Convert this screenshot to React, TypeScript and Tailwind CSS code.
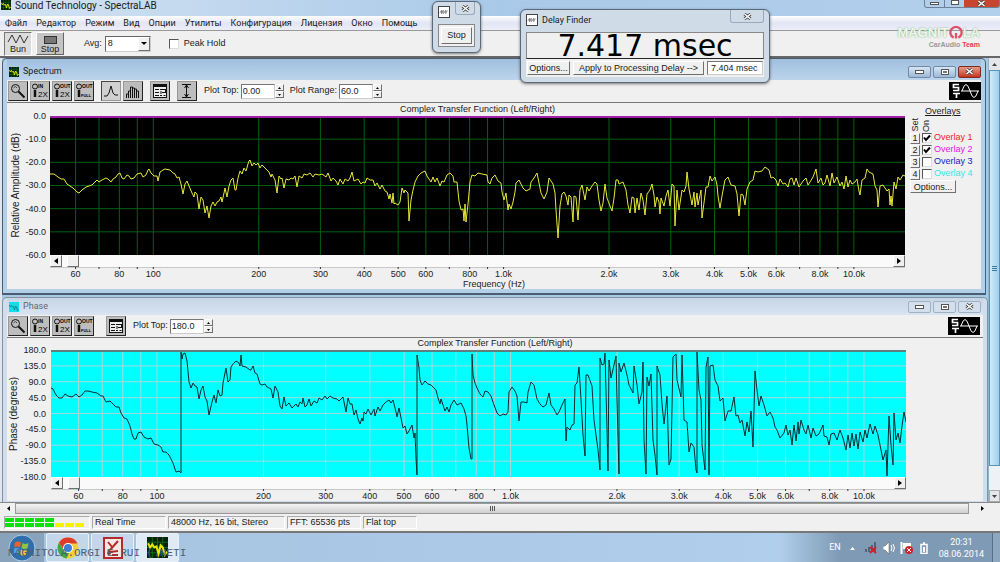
import React, { useState } from "react";

const MENU = ["Файл", "Редактор", "Режим", "Вид", "Опции", "Утилиты", "Конфигурация", "Лицензия", "Окно", "Помощь"];

const FREQS = [60, 70, 80, 90, 100, 200, 300, 400, 500, 600, 700, 800, 900, 1000, 2000, 3000, 4000, 5000, 6000, 7000, 8000, 9000, 10000];
const UNLABELLED = [70, 90, 700, 900, 7000, 9000];

const SPECTRUM_TRACE =
  "50,174 54,174 58,177 61,179 64,179 67,184 70,186 73,188 77,192 79,193 82,190 86,187 89,186 92,185 95,182 97,180 99,182 102,180 106,178 108,179 111,182 113,179 116,177 118,174 120,173 122,178 124,179 127,175 129,176 131,179 134,178 137,174 141,173 143,177 146,175 148,170 149,169 151,173 154,176 157,176 158,181 160,172 163,170 165,169 170,170 173,173 175,174 177,178 179,177 181,184 183,194 185,184 187,181 189,186 192,193 194,197 195,192 197,194 199,209 201,197 203,200 205,213 207,206 209,218 211,206 213,202 215,206 217,202 219,201 221,197 222,202 224,193 225,188 227,197 229,186 231,180 233,178 235,190 236,190 238,178 240,171 242,174 244,168 246,171 248,164 249,161 250,160 252,166 254,163 256,165 258,163 260,168 262,165 266,169 269,172 271,177 272,174 275,180 277,193 279,176 281,179 282,178 284,188 286,179 289,180 291,178 293,179 295,176 297,187 299,176 302,178 304,174 307,175 310,173 313,177 315,174 319,175 322,174 326,177 328,173 331,181 333,178 336,181 338,185 340,179 343,184 345,179 348,181 350,178 352,172 354,181 358,179 361,184 363,182 365,183 367,178 370,180 373,180 375,186 377,183 380,189 382,185 385,191 387,192 389,199 390,194 392,203 393,193 394,204 395,203 398,205 400,202 402,188 404,193 405,190 408,193 409,221 411,200 413,190 415,182 418,176 421,173 425,171 427,176 429,179 431,182 433,177 435,182 437,178 440,186 442,181 444,182 447,175 450,173 453,176 454,182 457,182 459,201 461,210 463,209 464,221 465,204 466,222 468,204 470,182 472,175 475,176 478,173 482,174 487,175 488,182 490,184 492,178 495,175 498,181 501,183 502,192 504,200 506,193 508,210 509,204 511,209 513,202 515,192 516,183 519,180 523,188 526,191 530,189 531,182 534,178 537,173 539,183 541,193 544,199 547,192 549,178 551,181 553,184 555,193 556,210 558,238 560,206 562,194 564,192 566,196 568,205 569,195 571,197 573,222 574,196 576,197 578,220 580,190 582,185 585,200 587,187 589,191 592,186 595,182 597,184 599,200 601,211 603,203 605,184 607,198 610,206 612,211 614,198 616,180 618,180 619,184 623,182 626,190 628,205 630,213 632,197 634,198 635,213 637,198 639,210 641,193 643,200 645,215 647,194 650,190 652,184 654,195 655,207 657,197 659,202 660,214 661,198 664,206 666,196 668,190 670,206 672,184 674,186 675,226 677,190 679,210 682,190 684,192 686,186 687,172 689,189 692,205 694,192 695,207 697,193 698,205 701,190 702,218 705,195 706,187 708,187 710,176 712,181 715,177 717,185 718,196 720,208 722,196 724,185 725,180 728,177 731,185 735,186 737,194 739,216 741,194 743,195 745,205 747,189 750,182 753,180 755,171 758,172 762,171 765,167 769,170 771,178 773,177 776,180 778,186 780,179 783,184 785,183 788,187 790,179 792,178 794,185 796,178 799,187 803,181 806,178 808,185 810,182 813,177 816,169 818,183 821,178 823,185 825,183 827,175 830,186 832,173 834,183 837,177 840,186 842,182 844,189 846,176 848,187 850,180 852,184 855,182 857,179 859,191 860,195 862,180 865,178 867,169 869,172 873,174 875,186 877,190 878,207 880,186 883,185 885,188 887,191 889,189 890,205 891,196 892,206 894,182 896,189 898,177 900,180 903,175 905,176";

const PHASE_TRACE =
  "51,388 53,389 56,395 59,398 62,398 65,394 68,396 72,397 76,394 79,397 82,395 85,391 88,391 92,392 97,393 101,396 103,396 106,402 110,401 113,404 116,407 119,407 121,413 124,418 127,419 130,426 132,434 134,439 136,439 138,433 141,432 144,437 148,439 151,438 154,444 158,445 161,447 163,452 166,452 169,455 173,463 176,472 179,471 181,473 181,352 182,359 183,354 185,353 187,361 189,382 191,388 193,383 195,386 197,387 199,399 201,390 203,386 205,397 207,401 209,415 212,402 214,395 216,403 218,390 220,396 222,395 223,383 226,368 228,382 230,380 231,367 233,364 236,361 239,363 240,366 241,355 242,366 246,367 250,370 251,370 253,366 255,373 257,374 260,384 262,385 265,384 267,387 271,389 273,398 275,386 278,392 280,406 282,409 284,397 286,406 289,403 292,408 296,404 298,407 300,402 302,404 303,398 305,407 307,405 309,399 311,406 314,401 317,403 319,398 322,400 325,396 327,399 330,396 333,398 337,399 339,401 343,397 344,402 346,412 348,398 350,404 352,404 354,415 356,410 358,419 360,424 362,418 363,421 364,412 366,414 368,409 371,415 374,409 375,416 378,407 380,411 383,405 386,402 389,400 391,403 393,400 396,412 397,417 399,408 401,418 403,428 405,426 407,434 409,431 412,425 414,438 415,433 416,458 417,475 417,355 419,368 420,380 422,385 425,381 428,384 431,385 434,388 436,390 438,398 440,404 441,399 443,405 445,411 447,407 449,412 451,405 454,400 457,405 461,403 464,409 466,416 467,425 469,448 471,459 472,459 472,354 473,375 475,383 477,388 480,394 483,397 485,391 488,392 491,396 494,405 497,413 500,416 503,414 506,415 508,412 509,392 512,387 515,391 517,396 519,421 521,402 524,402 527,403 528,392 531,382 534,385 537,399 540,404 543,407 546,405 549,393 551,405 554,409 557,415 559,412 562,405 565,399 566,441 567,427 570,430 572,425 574,424 575,385 577,383 579,367 581,400 583,435 585,456 586,375 588,375 592,386 594,420 598,450 600,470 600,358 602,365 604,364 605,353 607,430 608,471 609,360 611,378 614,365 616,356 617,400 619,474 619,363 621,372 624,363 627,375 629,385 633,393 634,366 637,385 639,404 642,392 643,362 644,440 646,474 647,377 649,386 651,374 653,440 655,455 657,475 657,366 660,375 662,404 664,424 667,396 669,465 671,459 673,357 676,354 677,380 681,397 682,355 684,420 687,422 689,452 691,443 694,447 696,470 697,473 697,352 699,390 701,400 702,445 705,470 706,367 708,357 709,475 710,366 713,365 715,380 718,386 720,401 723,398 725,421 728,411 731,411 734,397 736,416 738,415 740,423 742,420 745,436 747,422 749,432 751,411 752,429 753,447 755,371 757,390 759,406 761,396 764,405 767,416 770,412 773,418 775,427 777,430 780,438 784,433 786,425 788,435 790,430 792,445 794,425 796,441 798,422 799,434 801,420 804,430 806,434 808,425 811,438 813,428 816,436 819,434 823,425 824,436 827,437 829,445 831,434 834,433 837,440 840,430 843,438 846,450 848,435 850,448 852,433 854,446 856,434 858,449 860,432 863,442 865,430 867,438 870,424 873,434 875,426 878,435 880,445 883,460 886,450 887,476 889,416 891,445 893,465 894,413 896,440 898,433 900,443 902,426 904,412 906,422";

interface Range {
  lo: number;
  hi: number;
}

const SPECTRUM_RANGE: Range = { lo: 1.7051, hi: 4.1459 };
const PHASE_RANGE: Range = { lo: 1.7001, hi: 4.1188 };

const xAt = (freq: number, r: Range) => `${((Math.log10(freq) - r.lo) / (r.hi - r.lo)) * 100}%`;
const freqLabel = (f: number) => (f < 1000 ? String(f) : `${(f / 1000).toFixed(1)}k`);

const raised = "border border-t-white border-l-white border-r-[#6f6f6f] border-b-[#6f6f6f] bg-[#f0f0f0]";

interface PlotProps {
  range: Range;
  rows: number;
  viewBox: string;
  trace: string;
  gridColor: string;
  traceColor: string;
  topColor: string;
  className: string;
}

const Plot: React.FC<PlotProps> = ({ range, rows, viewBox, trace, gridColor, traceColor, topColor, className }) => (
  <svg className={`block w-full ${className}`} role="img" aria-label="Complex transfer function plot">
    {FREQS.map((f) => (
      <line key={f} x1={xAt(f, range)} x2={xAt(f, range)} y1="0" y2="100%" stroke={gridColor} />
    ))}
    {Array.from({ length: rows - 1 }, (_, i) => (
      <line key={i} x1="0" x2="100%" y1={`${((i + 1) / rows) * 100}%`} y2={`${((i + 1) / rows) * 100}%`} stroke={gridColor} />
    ))}
    <svg width="100%" height="100%" viewBox={viewBox} preserveAspectRatio="none">
      <polyline points={trace} fill="none" stroke={traceColor} strokeWidth="1" strokeLinejoin="round" vectorEffect="non-scaling-stroke" />
    </svg>
    <line x1="0" x2="100%" y1="1" y2="1" stroke={topColor} strokeWidth="2" />
  </svg>
);

const PlotScroll: React.FC = () => (
  <div className="flex h-[12px] bg-[#fafafa]">
    <button aria-label="Scroll left" className={`flex w-[12px] items-center justify-center ${raised}`}>
      <svg width="4" height="6"><path d="M4 0v6L0 3z" fill="#000" /></svg>
    </button>
    <div className={`ml-[5px] w-[12px] ${raised}`} />
    <div className="flex-1" />
    <button aria-label="Scroll right" className={`flex w-[12px] items-center justify-center ${raised}`}>
      <svg width="4" height="6"><path d="M0 0v6l4-3z" fill="#000" /></svg>
    </button>
  </div>
);

const FreqAxis: React.FC<{ range: Range }> = ({ range }) => (
  <svg className="block h-[12px] w-full overflow-visible">
    <line x1="0" x2="100%" y1="0.5" y2="0.5" stroke="#c8c8c8" />
    {FREQS.map((f) => (
      <line key={f} x1={xAt(f, range)} x2={xAt(f, range)} y1="0" y2="2" stroke="#333" />
    ))}
    {FREQS.filter((f) => !UNLABELLED.includes(f)).map((f) => (
      <text key={f} x={xAt(f, range)} y="10" textAnchor="middle" className="fill-[#222] text-[9px]">
        {freqLabel(f)}
      </text>
    ))}
  </svg>
);

interface ScaleProps {
  title: string;
  values: string[];
  className: string;
}

const Scale: React.FC<ScaleProps> = ({ title, values, className }) => (
  <div className={`flex w-[43px] justify-between pr-[4px] ${className}`}>
    <div className="flex w-[18px] items-center justify-center">
      <span className="rotate-180 text-[10px] leading-[12px] whitespace-nowrap [writing-mode:vertical-rl]">{title}</span>
    </div>
    <div className="-my-[5px] flex flex-col justify-between text-right">
      {values.map((v) => (
        <span key={v} className="leading-[10px]">{v}</span>
      ))}
    </div>
  </div>
);

const ToolButton: React.FC<{ label: string; pressed?: boolean; children: React.ReactNode }> = ({ label, pressed, children }) => (
  <button
    aria-label={label}
    className={`size-[20px] border ${pressed ? "border-t-[#444] border-l-[#444] border-r-[#999] border-b-[#999] bg-[#d0d0d0]" : "border-t-[#999] border-l-[#999] border-r-[#222] border-b-[#222] bg-[#bdbdbd]"}`}
  >
    <svg width="18" height="18" viewBox="0 0 18 18" fill="none" stroke="#111">{children}</svg>
  </button>
);

const ZoomGlyph: React.FC<{ top: string; bottom: string; small?: boolean }> = ({ top, bottom, small }) => (
  <>
    <circle cx="4" cy="4.5" r="2.5" />
    <path d="M4 8v7" strokeWidth="2.5" />
    <text x="7" y="6" stroke="none" className="fill-black text-[5px] font-bold">{top}</text>
    <text x={small ? "6" : "7"} y="15" stroke="none" className={small ? "fill-black text-[4px] font-bold" : "fill-black text-[8px]"}>{bottom}</text>
  </>
);

const ZoomTools: React.FC = () => (
  <div className="flex gap-[2px]">
    <ToolButton label="Zoom">
      <circle cx="6.5" cy="6.5" r="4" />
      <path d="M4.5 6q2-3 3.5 0" strokeWidth="0.7" />
      <path d="m9.5 9.5 6 6" strokeWidth="2" />
    </ToolButton>
    <ToolButton label="Zoom in 2X"><ZoomGlyph top="IN" bottom="2X" /></ToolButton>
    <ToolButton label="Zoom out 2X"><ZoomGlyph top="OUT" bottom="2X" /></ToolButton>
    <ToolButton label="Zoom out full"><ZoomGlyph top="OUT" bottom="FULL" small /></ToolButton>
  </div>
);

const OptionsTool: React.FC = () => (
  <ToolButton label="Display options">
    <rect x="2.5" y="2.5" width="13" height="13" fill="#eee" />
    <path d="M2 4h14" strokeWidth="2" />
    <path d="M4 7.5h4M4 10.5h4M4 13.5h4M9 7.5h5M11 10.5h4M9 13.5h2M12.5 13.5h2" />
    <path d="M10 9v3M14.5 7v3" />
  </ToolButton>
);

const NumberBox: React.FC<{ label: string; value: string; id: string }> = ({ label, value, id }) => (
  <div className="flex items-center">
    <label htmlFor={id} className="pr-[2px] whitespace-nowrap">{label}</label>
    <input id={id} defaultValue={value} className="h-[15px] w-[34px] border border-[#777] border-r-[#ccc] border-b-[#ccc] bg-white pl-[1px] text-[9px] outline-none" />
    <div className="flex w-[9px] flex-col">
      <button aria-label={`${label} up`} className={`flex h-[7px] items-center justify-center ${raised}`}>
        <svg width="3" height="2"><path d="M0 2h3L1.5 0z" /></svg>
      </button>
      <button aria-label={`${label} down`} className={`flex h-[7px] items-center justify-center ${raised}`}>
        <svg width="3" height="2"><path d="M0 0h3L1.5 2z" /></svg>
      </button>
    </div>
  </div>
);

const Logo: React.FC = () => (
  <svg width="32" height="18" viewBox="0 0 32 18" className="ml-auto bg-black" fill="none" stroke="#fff" role="img" aria-label="ST">
    <path d="M10 2.5H4.5v3h5v3H4M4 11.5h7M7.5 11v5" strokeWidth="1.7" />
    <path d="M12 9h18M13 9Q17-4 21 9T29 9" />
  </svg>
);

const Cross: React.FC<{ color: string }> = ({ color }) => (
  <svg width="9" height="7" viewBox="0 0 9 7">
    <path d="m1.5 1 6 5m0-5-6 5" stroke="#444" strokeWidth="3" />
    <path d="m1.5 1 6 5m0-5-6 5" stroke={color} strokeWidth="1.5" />
  </svg>
);

const CaptionButtons: React.FC<{ active?: boolean }> = ({ active }) => {
  const base = "flex h-[12px] w-[23px] items-center justify-center rounded-[2px] border";
  const plain = active ? "border-[#7189a5] bg-gradient-to-b from-[#d6e5f4] to-[#9db9d6]" : "border-[#a3b0bf] bg-[#d3dfec]";
  return (
    <div className="ml-auto flex gap-[2px]">
      <button aria-label="Minimize" className={`${base} ${plain}`}>
        <span className="h-[4px] w-[9px] border border-[#555] bg-white" />
      </button>
      <button aria-label="Maximize" className={`${base} ${plain}`}>
        <span className="h-[6px] w-[8px] border border-[#555] bg-white p-[1px]"><span className="block h-full border border-[#777]" /></span>
      </button>
      <button aria-label="Close" className={`${base} ${active ? "border-[#7c2a20] bg-gradient-to-b from-[#e59a88] to-[#c3321b]" : plain}`}>
        <Cross color="#fff" />
      </button>
    </div>
  );
};

const ScopeIcon: React.FC<{ className?: string; bg?: string; line?: string; grid?: string }> = ({ className = "size-[10px]", bg = "#06230a", line = "#e6e600", grid = "#0b6a1a" }) => (
  <svg viewBox="0 0 20 20" className={className}>
    <rect width="20" height="20" fill={bg} />
    <path d="M5 0v20M10 0v20M15 0v20M0 5h20M0 10h20M0 15h20" stroke={grid} />
    <path d="M1 6l2 4 2-3 2 3 2-1 2 7 2-8 2 2 2 7 2-3" fill="none" stroke={line} strokeWidth="2" />
  </svg>
);

const OVERLAYS = [
  { id: 1, color: "text-[#f02020]", on: true },
  { id: 2, color: "text-[#e020e0]", on: true },
  { id: 3, color: "text-[#2020c0]", on: false },
  { id: 4, color: "text-[#30e8e8]", on: false },
];

const CheckBox: React.FC<{ id: string; checked?: boolean }> = ({ id, checked }) => (
  <span className="grid size-[10px] shrink-0">
    <input id={id} type="checkbox" defaultChecked={checked} className="peer col-start-1 row-start-1 size-[10px] appearance-none border border-[#555] border-r-[#ddd] border-b-[#ddd] bg-white" />
    <svg viewBox="0 0 10 10" className="pointer-events-none invisible col-start-1 row-start-1 size-[10px] peer-checked:visible">
      <path d="m2 4.5 2 2.5 4-4.5" fill="none" stroke="#000" strokeWidth="2" />
    </svg>
  </span>
);

const OverlayPanel: React.FC = () => (
  <div className="w-[76px] pt-[3px] pl-[5px]">
    <div className="pl-[15px] leading-[10px] underline">Overlays</div>
    <div className="flex h-[16px] items-end gap-[1px]">
      <span className="w-[10px] rotate-180 leading-[10px] [writing-mode:vertical-rl]">Set</span>
      <span className="w-[10px] rotate-180 leading-[10px] [writing-mode:vertical-rl]">On</span>
    </div>
    {OVERLAYS.map((o) => (
      <div key={o.id} className="flex h-[12px] items-center">
        <button className={`h-[11px] w-[10px] leading-[9px] ${raised}`}>{o.id}</button>
        <div className="mr-[2px] ml-[2px] flex"><CheckBox id={`overlay-${o.id}`} checked={o.on} /></div>
        <label htmlFor={`overlay-${o.id}`} className={`whitespace-nowrap ${o.color}`}>Overlay {o.id}</label>
      </div>
    ))}
    <button className={`h-[13px] w-[46px] leading-[10px] ${raised}`}>Options...</button>
  </div>
);

const SpectrumWindow: React.FC = () => (
  <section className="mr-[2px] rounded-t-[5px] border-x border-t border-b-2 border-[#4a5d72] bg-[#b4d0e8] px-[4px] pb-[4px]">
    <header className="flex h-[21px] items-center bg-gradient-to-b from-[#9fbfdd] to-[#bcd4ec] pt-[4px] pl-[2px]">
      <ScopeIcon />
      <h2 className="pl-[4px] font-['Roboto'] text-[9px]">Spectrum</h2>
      <CaptionButtons active />
    </header>
    <div className="bg-[#f0f0f0]">
      <div className="flex h-[23px] items-center border-b border-[#777] pl-[1px]">
        <ZoomTools />
        <div className="ml-[7px] flex gap-[2px]">
          <ToolButton label="Line plot" pressed><path d="M2 14h3l2-3 2-7 2 7 2 2h3" /></ToolButton>
          <ToolButton label="Bar plot"><path d="M2.5 16v-4h2v4-7h2v7-11h2v11-10h2v10-9h2v9-7h2v7" /></ToolButton>
        </div>
        <div className="ml-[7px] flex"><OptionsTool /></div>
        <div className="ml-[7px] flex">
          <ToolButton label="Amplitude range"><path d="M4 2.5h9M4 15.5h9M8.5 3v12M6.5 6l2-3 2 3M6.5 12l2 3 2-3" /></ToolButton>
        </div>
        <div className="ml-[7px] flex gap-[6px]">
          <NumberBox id="spectrum-top" label="Plot Top:" value="0.00" />
          <NumberBox id="spectrum-range" label="Plot Range:" value="60.0" />
        </div>
        <Logo />
      </div>
      <div className="flex">
        <Scale className="mt-[13px] h-[139px]" title="Relative Amplitude (dB)" values={["0.0", "-10.0", "-20.0", "-30.0", "-40.0", "-50.0", "-60.0"]} />
        <div className="min-w-0 flex-1">
          <h3 className="h-[13px] text-center leading-[12px]">Complex Transfer Function (Left/Right)</h3>
          <Plot className="h-[139px] bg-black" range={SPECTRUM_RANGE} rows={6} viewBox="50 116 855 139" trace={SPECTRUM_TRACE} gridColor="#00600f" traceColor="#e8e83a" topColor="#a020a8" />
          <PlotScroll />
          <FreqAxis range={SPECTRUM_RANGE} />
        </div>
        <OverlayPanel />
      </div>
      <p className="h-[10px] text-center leading-[10px]">Frequency (Hz)</p>
    </div>
  </section>
);

const PhaseWindow: React.FC = () => (
  <section className="mt-[2px] flex-1 rounded-t-[5px] border-x border-t border-[#8492a3] bg-[#cfdded] px-[4px]">
    <header className="flex h-[17px] items-center bg-gradient-to-b from-[#c6d5e6] to-[#d8e4f1] px-[2px]">
      <ScopeIcon bg="#00e5f0" grid="#37c9d6" line="#0a8a96" />
      <h2 className="pl-[4px] font-['Roboto'] text-[9px] text-[#666]">Phase</h2>
      <CaptionButtons />
    </header>
    <div className="bg-[#f0f0f0]">
      <div className="flex h-[23px] items-center border-b border-[#777] pr-[3px] pl-[1px]">
        <ZoomTools />
        <div className="ml-[12px] flex"><OptionsTool /></div>
        <div className="ml-[7px] flex"><NumberBox id="phase-top" label="Plot Top:" value="180.0" /></div>
        <Logo />
      </div>
      <h3 className="h-[12px] text-center leading-[11px]">Complex Transfer Function (Left/Right)</h3>
      <div className="flex">
        <Scale className="h-[127px]" title="Phase (degrees)" values={["180.0", "135.0", "90.0", "45.0", "0.0", "-45.0", "-90.0", "-135.0", "-180.0"]} />
        <div className="min-w-0 flex-1 pl-[1px]">
          <Plot className="h-[127px] bg-[#00ffff]" range={PHASE_RANGE} rows={8} viewBox="51 350 855 127" trace={PHASE_TRACE} gridColor="#a4d8dc" traceColor="#062b33" topColor="#5f7f7f" />
          <PlotScroll />
          <FreqAxis range={PHASE_RANGE} />
        </div>
        <div className="w-[77px]" />
      </div>
    </div>
  </section>
);

const ToolWindow: React.FC<{ title?: string; className: string; children: React.ReactNode }> = ({ title, className, children }) => (
  <section className={`absolute flex flex-col rounded-[6px] border border-[#5a6a7a] bg-[#cfdce8] px-[5px] pb-[5px] shadow-[0_1px_3px_rgba(0,0,0,0.5)] ${className}`}>
    <header className="flex justify-between">
      <div className="flex items-center gap-[4px] pt-[4px]">
        <svg width="12" height="12" viewBox="0 0 12 12" className="border border-[#444] bg-white">
          <path d="M1 7l2-3v4l2-4v4l3-4v4l2-4" fill="none" stroke="#555" strokeWidth="0.8" />
        </svg>
        {title && <h2 className="font-['Roboto'] text-[9px] leading-[12px]">{title}</h2>}
      </div>
      <button aria-label="Close" className={`flex h-[13px] items-center justify-center rounded-b-[3px] border border-t-0 border-[#9aa9b8] ${title ? "w-[34px]" : "w-[20px]"}`}>
        <Cross color="#fff" />
      </button>
    </header>
    {children}
  </section>
);

const Brand: React.FC = () => (
  <div className="absolute top-[24px] right-[20px] flex flex-col items-end">
    <div className="flex items-center font-['Liberation_Sans'] text-[13px] leading-[17px] font-bold text-[#f1f5ea] [text-shadow:0_0_2px_#6fae80]">
      <span>MAGNIT</span>
      <svg width="14" height="17" viewBox="0 0 15 17" fill="none" stroke="#e0506a" strokeWidth="2.5">
        <path d="M5 14a6 6 0 1 1 5 0M7.5 9v6" />
      </svg>
      <span>LA</span>
    </div>
    <div className="text-[7px] leading-[8px] font-bold text-[#999]">CarAudio <span className="text-[#dd4055]">Team</span></div>
  </div>
);

const Taskbar: React.FC = () => {
  const task = "flex h-[29px] w-[43px] items-center justify-center rounded-[2px] border border-[#e6f0fa] bg-[#c3d6ea]";
  return (
    <footer className="relative flex h-[29px] gap-[2px] bg-gradient-to-r from-[#a5c2df] via-[#b0cfec] via-78% to-[#7f9ab4] to-84%">
      <button aria-label="Start" className="flex w-[44px] items-center justify-center bg-[#8aa3bd]">
        <svg width="28" height="28" viewBox="0 0 28 28">
          <circle cx="14" cy="14" r="13" fill="#2f6ea8" stroke="#a9cbe6" />
          <path d="M7 8.5q3-2 6 0l-1 5q-3-2-6 0z" fill="#e8632a" />
          <path d="M14.5 9q3 2 6 0l-1 5q-3 2-6 0z" fill="#8cc63e" />
          <path d="M5.5 15q3-2 6 0l-1 5q-3-2-6 0z" fill="#4aa8e8" />
          <path d="M13 15.5q3 2 6 0l-1 5q-3 2-6 0z" fill="#f7c52c" />
        </svg>
      </button>
      <button aria-label="Chrome" className={task}>
        <svg width="22" height="22" viewBox="0 0 22 22">
          <circle cx="11" cy="11" r="10.5" fill="#f5cf2f" />
          <path d="M1.9 5.8A10.5 10.5 0 0 1 20.5 6.5H11a4.6 4.6 0 0 0-4.3 6z" fill="#dd3b2c" />
          <path d="M1.9 5.8l5 7.5a4.6 4.6 0 0 0 5.5 2L9.5 21.4A10.5 10.5 0 0 1 1.9 5.8" fill="#3fa648" />
          <circle cx="11" cy="11" r="5" fill="#fff" />
          <circle cx="11" cy="11" r="4" fill="#3d7fd6" />
        </svg>
      </button>
      <button aria-label="Setup tool" className={task}>
        <svg width="20" height="22" viewBox="0 0 20 22">
          <rect x="1" y="1" width="18" height="20" fill="#fbe9e6" stroke="#b52a28" strokeWidth="2" />
          <path d="M5 5l4 5M15 4l-8 9M5 13l2 2 8-1M9 18h6" fill="none" stroke="#b52a28" strokeWidth="2" />
          <circle cx="6" cy="16" r="2" fill="#b52a28" />
        </svg>
      </button>
      <button aria-label="SpectraLAB" className={`${task} bg-[#e0eaf5]`}>
        <ScopeIcon className="size-[21px]" />
      </button>
      <span className="absolute top-[13px] left-[8px] font-['Liberation_Mono'] text-[11px] leading-[14px] whitespace-pre text-[#4a6076]">MAGNITOLA.ORGI E.RUI (.NETI</span>
      <div className="ml-auto flex items-center font-['Roboto'] text-[9px] text-white">
        <span className="mr-[8px]">EN</span>
        <svg width="7" height="4" className="mr-[9px]"><path d="M1 4h5L3.5 1z" fill="#fff" /></svg>
        <svg width="13" height="12" viewBox="0 0 13 12" className="mr-[5px]">
          <path d="M0 10h2V7H0zM3 10h2V5H3zM6 10h2V3H6zM9 10h2V0H9z" fill="#536476" />
          <path d="m5 5 6 6m0-6-6 6" stroke="#d02028" strokeWidth="2" />
        </svg>
        <svg width="12" height="12" viewBox="0 0 12 12" className="mr-[5px]">
          <path d="M0 4h2l4-4v12L2 8H0z" fill="#fff" stroke="#555" strokeWidth="0.5" />
          <path d="M8 3q2 3 0 6M10 2q3 4 0 8" fill="none" stroke="#fff" />
        </svg>
        <svg width="13" height="12" viewBox="0 0 13 12" className="mr-[7px]">
          <path d="M1.5 0v12" stroke="#fff" strokeWidth="2" />
          <path d="M3 1h8v6H3z" fill="#fff" />
          <circle cx="9" cy="8" r="4" fill="#d02028" />
          <path d="m7 6 4 4m0-4-4 4" stroke="#fff" />
        </svg>
        <svg width="8" height="12" viewBox="0 0 8 12" className="mr-[11px]">
          <path d="M1 2.5h6v9H1zM3 1h2" fill="none" stroke="#fff" strokeWidth="1.5" />
          <path d="M3 5h2v5H3z" fill="#fff" />
        </svg>
        <div className="mr-[8px] text-center leading-[12px]">
          <div>20:31</div>
          <div>08.06.2014</div>
        </div>
        <button aria-label="Show desktop" className="h-[29px] w-[8px] border-l border-[#56708a] bg-[#8da7c0]" />
      </div>
    </footer>
  );
};

const App: React.FC = () => {
  const [avg, setAvg] = useState("8");
  const pane = "border border-[#aaa] border-r-white border-b-white pl-[2px] leading-[11px] whitespace-nowrap";

  return (
    <div className="relative flex min-h-screen w-full flex-col overflow-hidden bg-[#f0f0f0] font-['Liberation_Sans',sans-serif] text-[9px] text-[#1a1a1a]">
      <header className="flex h-[16px] items-start bg-gradient-to-r from-[#d4e3f2] via-[#a9c9e8] to-[#b2d0ec] pl-[1px]">
        <ScopeIcon />
        <h1 className="pl-[4px] font-['Roboto'] text-[10px] leading-[12px]">Sound Technology - SpectraLAB</h1>
        <div className="ml-auto flex h-[8px] overflow-hidden rounded-b-[3px] border border-t-0 border-[#6d8299]">
          <button aria-label="Minimize" className="flex w-[20px] items-end justify-center border-r border-[#6d8299] pb-[2px]"><span className="h-[3px] w-[9px] border border-[#555] bg-white" /></button>
          <button aria-label="Restore" className="flex w-[19px] items-end justify-center pb-[2px]"><span className="h-[5px] w-[8px] border border-[#555] bg-white" /></button>
          <button aria-label="Close" className="flex w-[35px] items-center justify-center bg-[#c9452f]"><Cross color="#fff" /></button>
        </div>
      </header>

      <nav className="flex h-[15px] items-center gap-[9px] border-b border-[#999] bg-gradient-to-b from-white via-[#e2e5f4] to-[#eceef8] pl-[5px] font-['Roboto']">
        {MENU.map((item) => (
          <button key={item} className="leading-[12px]">{item}</button>
        ))}
      </nav>

      <div className="flex h-[27px] items-center border-b-2 border-[#666] pl-[4px]">
        <button className="flex h-[24px] w-[28px] flex-col items-center border border-[#777] border-r-white border-b-white bg-[#dcdcdc] leading-[9px]">
          <svg width="22" height="12" viewBox="0 0 22 12"><path d="M1 9L5 2l4 8 4-8 4 8 4-7" fill="none" stroke="#333" strokeLinejoin="round" /></svg>
          Bun
        </button>
        <button className="ml-[4px] flex h-[23px] w-[28px] flex-col items-center border border-t-white border-l-white border-r-[#666] border-b-[#666] bg-[#c4c4c4] pt-[3px] leading-[10px]">
          <span className="h-[8px] w-[13px] shrink-0 border border-[#333] bg-[#777]" />
          Stop
        </button>
        <label htmlFor="avg" className="ml-[20px]">Avg:</label>
        <div className="relative ml-[3px]">
          <select id="avg" value={avg} onChange={(e) => setAvg(e.target.value)} className="block h-[16px] w-[46px] appearance-none border border-[#666] border-r-[#ccc] border-b-[#ccc] bg-white pl-[2px] text-[9px]">
            <option>4</option>
            <option>8</option>
            <option>16</option>
          </select>
          <span className={`pointer-events-none absolute top-[1px] right-[1px] flex h-[14px] w-[12px] items-center justify-center ${raised}`}>
            <svg width="6" height="3"><path d="M0 0h6L3 3z" /></svg>
          </span>
        </div>
        <div className="ml-[18px] flex items-center gap-[5px]">
          <CheckBox id="peak" />
          <label htmlFor="peak">Peak Hold</label>
        </div>
      </div>

      <main className="flex flex-1">
        <div className="w-[2px] bg-[#dfe6ee]" />
        <div className="flex min-w-0 flex-1 flex-col bg-[#a6cbe0]">
          <SpectrumWindow />
          <PhaseWindow />
        </div>
        <div className="flex w-[12px] flex-col border-l border-[#8fb3cc] bg-[#eef1f5]">
          <button aria-label="Scroll up" className="flex h-[12px] items-center justify-center bg-[#e4e6ea]"><svg width="5" height="3"><path d="M0 3h5L2.5 0z" fill="#444" /></svg></button>
          <div className="flex h-[396px] flex-col items-center justify-center gap-[1px] border border-[#5a93b8] bg-gradient-to-r from-[#cfeaf8] to-[#9fd0ea]">
            <span className="h-px w-[5px] bg-[#3a7a9c]" />
            <span className="h-px w-[5px] bg-[#3a7a9c]" />
            <span className="h-px w-[5px] bg-[#3a7a9c]" />
          </div>
          <button aria-label="Scroll down" className="mt-auto flex h-[12px] items-center justify-center border border-[#aaa] bg-[#e4e6ea]"><svg width="5" height="3"><path d="M0 0h5L2.5 3z" fill="#444" /></svg></button>
        </div>
      </main>

      <div className="flex h-[12px] items-center border-t border-[#888] pr-[14px] pl-[2px]">
        <button aria-label="Scroll left" className="flex w-[13px] justify-center"><svg width="3" height="5"><path d="M3 0v5L0 2.5z" /></svg></button>
        <div className="flex h-[11px] flex-1 items-center justify-center gap-[1px] border border-[#999] bg-gradient-to-b from-[#f4f4f4] to-[#cfcfcf]">
          <span className="h-[5px] w-px bg-[#555]" />
          <span className="h-[5px] w-px bg-[#555]" />
          <span className="h-[5px] w-px bg-[#555]" />
        </div>
        <button aria-label="Scroll right" className="ml-[10px] flex w-[7px] justify-center"><svg width="3" height="5"><path d="M0 0v5l3-2.5z" /></svg></button>
      </div>

      <div className="flex h-[19px] items-center gap-[2px] border-b-2 border-[#777] pl-[4px]">
        <div className="grid h-[13px] w-[86px] grid-cols-[repeat(8,9px)] grid-rows-[4px_4px] content-center gap-[1px] border border-[#aaa] border-r-white border-b-white">
          {Array.from({ length: 16 }, (_, i) => {
            const col = i % 8;
            if (col > 4 && i < 8) return <span key={i} />;
            return <span key={i} className={col > 4 ? "bg-[#f4f400]" : "bg-[#10e010]"} />;
          })}
        </div>
        <div className={`h-[13px] w-[74px] ${pane}`}>Real Time</div>
        <div className={`h-[13px] w-[117px] ${pane}`}>48000 Hz, 16 bit, Stereo</div>
        <div className={`h-[13px] w-[74px] ${pane}`}>FFT: 65536 pts</div>
        <div className={`h-[13px] w-[54px] ${pane}`}>Flat top</div>
      </div>

      <Taskbar />

      <ToolWindow className="top-[1px] left-[432px] h-[52px] w-[49px]">
        <div className="mt-[6px] flex flex-1 border border-[#888] bg-[#f0f0f0] p-[2px]">
          <button className={`flex-1 text-[9px] ${raised}`}>Stop</button>
        </div>
      </ToolWindow>
      <ToolWindow title="Delay Finder" className="top-[9px] left-[520px] h-[74px] w-[250px]">
        <div className="mt-[6px] flex h-[27px] items-center justify-center border border-[#888] border-b-[#222] bg-[#f0f0f0] font-['DejaVu_Sans'] text-[30px] leading-[25px] text-black">7.417 msec</div>
        <div className="flex flex-1 items-center gap-[3px] bg-[#f0f0f0] px-[1px]">
          <button className={`h-[14px] w-[43px] whitespace-nowrap ${raised}`}>Options...</button>
          <button className={`h-[14px] flex-1 whitespace-nowrap ${raised}`}>Apply to Processing Delay --&gt;</button>
          <input aria-label="Processing delay" defaultValue="7.404 msec" className="h-[14px] w-[56px] border border-[#777] border-r-[#ccc] border-b-[#ccc] bg-white pl-[3px] text-[9px]" />
        </div>
      </ToolWindow>
      <Brand />
    </div>
  );
};

export default App;
